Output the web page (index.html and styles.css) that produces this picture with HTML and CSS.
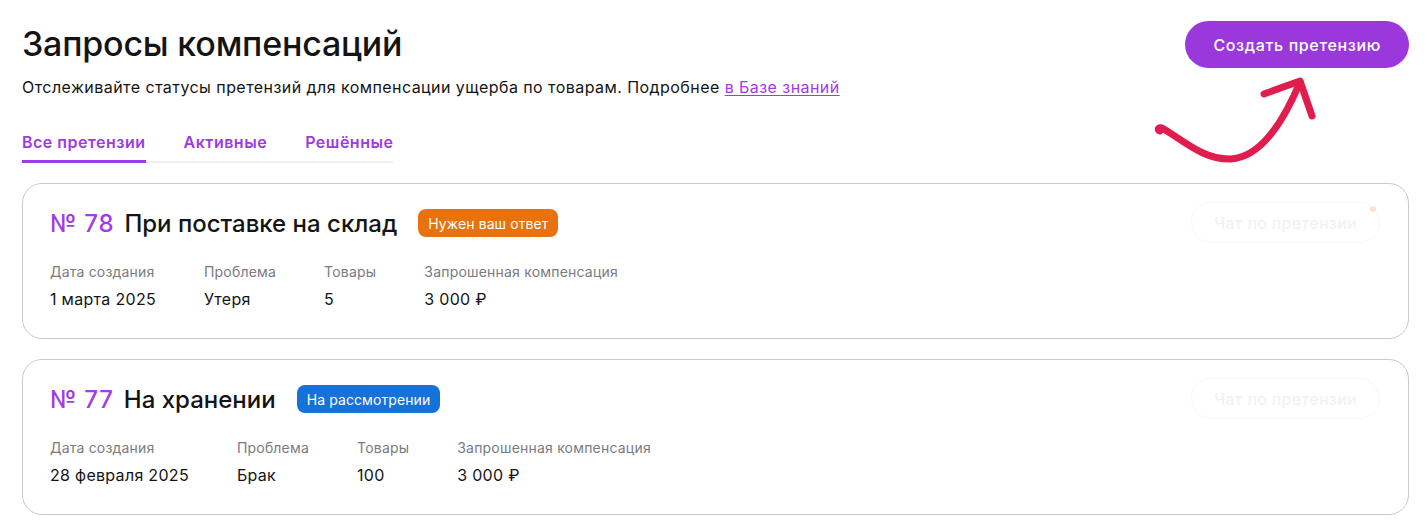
FILE: index.html
```html
<!DOCTYPE html>
<html lang="ru">
<head>
<meta charset="utf-8">
<title>Запросы компенсаций</title>
<link rel="stylesheet" href="styles.css">
</head>
<body>
<div class="page">
  <header class="header">
    <div class="header-main">
      <h1 class="title">Запросы компенсаций</h1>
      <p class="subtitle">Отслеживайте статусы претензий для компенсации ущерба по товарам. Подробнее <a class="link" href="#">в Базе знаний</a></p>
      <nav class="tabs">
        <a class="tab tab-active" href="#">Все претензии</a>
        <a class="tab" href="#">Активные</a>
        <a class="tab" href="#">Решённые</a>
      </nav>
    </div>
    <button class="btn-primary">Создать претензию</button>
    <svg class="arrow" width="180" height="110" viewBox="1140 60 180 110" fill="none" stroke="#e11d4d" stroke-width="7" stroke-linecap="round" stroke-linejoin="round">
      <path d="M1157 131 C1154 130 1155 127 1159 128 C1180 140 1200 160 1228 159 C1260 157 1282 118 1297 82"/>
      <path d="M1261 94 L1297 81 L1309 116"/>
    </svg>
  </header>

  <section class="list">
    <article class="card">
      <div class="card-body">
        <div class="card-head">
          <span class="num">№ 78</span>
          <span class="card-title">При поставке на склад</span>
          <span class="badge badge-orange">Нужен ваш ответ</span>
        </div>
        <div class="fields">
          <div class="field"><div class="label">Дата создания</div><div class="value">1 марта 2025</div></div>
          <div class="field"><div class="label">Проблема</div><div class="value">Утеря</div></div>
          <div class="field"><div class="label">Товары</div><div class="value">5</div></div>
          <div class="field"><div class="label">Запрошенная компенсация</div><div class="value">3 000 ₽</div></div>
        </div>
      </div>
      <button class="btn-ghost">Чат по претензии<span class="dot"></span></button>
    </article>

    <article class="card">
      <div class="card-body">
        <div class="card-head">
          <span class="num">№ 77</span>
          <span class="card-title">На хранении</span>
          <span class="badge badge-blue">На рассмотрении</span>
        </div>
        <div class="fields">
          <div class="field"><div class="label">Дата создания</div><div class="value">28 февраля 2025</div></div>
          <div class="field"><div class="label">Проблема</div><div class="value">Брак</div></div>
          <div class="field"><div class="label">Товары</div><div class="value">100</div></div>
          <div class="field"><div class="label">Запрошенная компенсация</div><div class="value">3 000 ₽</div></div>
        </div>
      </div>
      <button class="btn-ghost">Чат по претензии</button>
    </article>
  </section>
</div>
</body>
</html>
```

FILE: styles.css
```css
* { box-sizing: border-box; }
html, body { margin: 0; background: #fff; }
body {
  font-family: Inter, "Noto Sans", "Liberation Sans", sans-serif;
  color: #141414;
}
.page {
  padding: 24px 18px 0 22px;
}
.header {
  position: relative;
  display: flex;
  justify-content: space-between;
  align-items: flex-start;
}
.title {
  margin: 0;
  font-size: 34px;
  line-height: 40px;
  font-weight: 500;
  letter-spacing: -0.2px;
}
.subtitle {
  margin: 12px 0 0;
  font-size: 16px;
  line-height: 22px;
  letter-spacing: 0.44px;
}
.link {
  color: #a23be6;
  text-decoration: underline;
  text-underline-offset: 2px;
}
.tabs {
  display: inline-flex;
  gap: 38px;
  margin-top: 32px;
  border-bottom: 2px solid #efeff2;
}
.tab {
  display: block;
  padding-bottom: 6px;
  margin-bottom: -2px;
  font-size: 16px;
  line-height: 24px;
  font-weight: 600;
  letter-spacing: 0.5px;
  color: #9d3be0;
  text-decoration: none;
  border-bottom: 3px solid transparent;
}
.tab-active { border-bottom-color: #9d3be0; }
.btn-primary {
  margin-top: -3px;
  height: 47px;
  padding: 0 28px;
  border: none;
  border-radius: 24px;
  background: #9b38dc;
  color: #fff;
  font-family: inherit;
  font-size: 16px;
  font-weight: 500;
  letter-spacing: 0.65px;
}
.arrow {
  position: absolute;
  right: 86px;
  top: 36px;
}
.list {
  display: flex;
  flex-direction: column;
  gap: 20px;
  margin-top: 20px;
}
.card {
  display: flex;
  justify-content: space-between;
  align-items: flex-start;
  height: 156px;
  padding: 18px 28px 0 27px;
  border: 1px solid #c9cacf;
  border-radius: 20px;
}
.card-body { padding-top: 7px; }
.card-head {
  display: flex;
  align-items: center;
  height: 28px;
}
.num {
  font-size: 24px;
  font-weight: 500;
  color: #a23bea;
  letter-spacing: 0.8px;
  margin-right: 10px;
}
.card-title {
  font-size: 24px;
  font-weight: 500;
  letter-spacing: 0;
  margin-right: 21px;
}
.badge {
  display: inline-flex;
  align-items: center;
  height: 28px;
  padding: 0 10px;
  border-radius: 8px;
  color: #fff;
  font-size: 14px;
  font-weight: 400;
  letter-spacing: 0.1px;
}
.badge-orange { background: #e8730e; }
.badge-blue { background: #1672d8; }
.fields {
  display: flex;
  gap: 48px;
  margin-top: 26px;
}
.label {
  font-size: 14px;
  line-height: 18px;
  color: #7a7b80;
  letter-spacing: 0.2px;
}
.value {
  margin-top: 7px;
  font-size: 16px;
  line-height: 22px;
  letter-spacing: 0.3px;
}
.btn-ghost {
  position: relative;
  height: 41px;
  padding: 0 22px;
  border: 1px solid #fbf7f7;
  border-radius: 21px;
  background: #fff;
  color: #f4f1f4;
  font-family: inherit;
  font-size: 16px;
  font-weight: 500;
  letter-spacing: 0.3px;
}
.dot {
  position: absolute;
  right: 3px;
  top: 3px;
  width: 6px;
  height: 6px;
  border-radius: 50%;
  background: #fbe2cf;
}
```
